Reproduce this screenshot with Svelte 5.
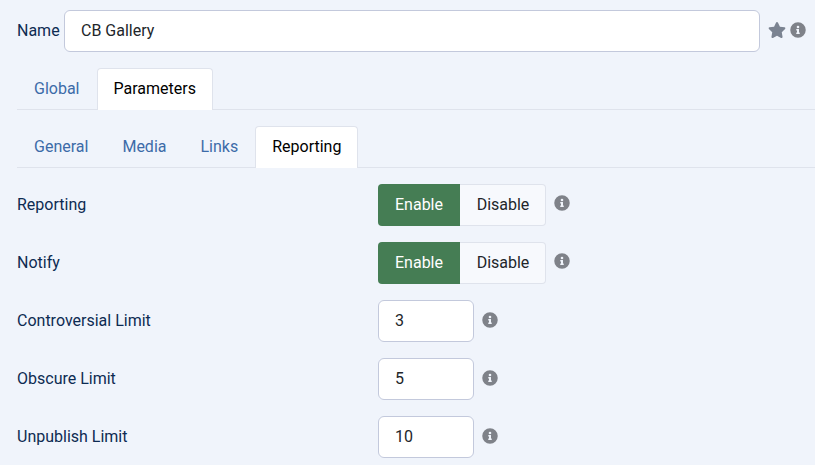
<script>
  const mainTabs = [
    { label: 'Global', active: false },
    { label: 'Parameters', active: true }
  ];
  const subTabs = [
    { label: 'General', active: false },
    { label: 'Media', active: false },
    { label: 'Links', active: false },
    { label: 'Reporting', active: true }
  ];
  const toggles = ['Reporting', 'Notify'];
  const limits = [
    { label: 'Controversial Limit', value: '3' },
    { label: 'Obscure Limit', value: '5' },
    { label: 'Unpublish Limit', value: '10' }
  ];
</script>

{#snippet info()}
  <svg class="info" viewBox="0 0 512 512" aria-hidden="true">
    <path d="M256 8a248 248 0 1 0 0 496 248 248 0 0 0 0-496zm0 110a42 42 0 1 1 0 84 42 42 0 0 1 0-84zm56 254c0 7-5 12-12 12h-88c-7 0-12-5-12-12v-24c0-7 5-12 12-12h12v-64h-12c-7 0-12-5-12-12v-24c0-7 5-12 12-12h64c7 0 12 5 12 12v100h12c7 0 12 5 12 12z" />
  </svg>
{/snippet}

{#snippet tabs(items)}
  <ul class="tabs">
    {#each items as tab}
      <li class="tab" class:active={tab.active}>{tab.label}</li>
    {/each}
  </ul>
{/snippet}

<div class="page">
  <div class="name-row">
    <label class="name-label" for="name">Name</label>
    <input id="name" class="field name-input" type="text" value="CB Gallery" />
    <div class="name-icons">
      <svg class="star" viewBox="0 0 576 512" aria-hidden="true">
        <path d="M259 18l-65 132-146 21c-26 4-37 36-18 55l106 103-25 146c-5 26 23 46 46 34l131-69 131 69c23 12 51-8 46-34l-25-146 106-103c19-19 8-51-18-55l-146-21-65-132c-12-24-47-24-58 0z" />
      </svg>
      {@render info()}
    </div>
  </div>

  {@render tabs(mainTabs)}
  {@render tabs(subTabs)}

  <div class="rows">
    {#each toggles as label}
      <div class="row">
        <div class="row-label">{label}</div>
        <div class="control">
          <div class="switch">
            <span class="opt on">Enable</span>
            <span class="opt off">Disable</span>
          </div>
          <span class="hint up">{@render info()}</span>
        </div>
      </div>
    {/each}
    {#each limits as item}
      <div class="row">
        <div class="row-label">{item.label}</div>
        <div class="control">
          <input class="field limit" type="text" value={item.value} />
          <span class="hint">{@render info()}</span>
        </div>
      </div>
    {/each}
  </div>
</div>

<style>
  :global(body) {
    background: #f0f4fb;
    overflow: hidden;
  }

  .page {
    padding: 10px 0 0 17px;
    font-family: Roboto, sans-serif;
    font-size: 16px;
    line-height: 24px;
    color: #0d2b52;
  }

  .name-row {
    display: flex;
    align-items: center;
    height: 42px;
  }

  .name-label {
    width: 47px;
  }

  .field {
    box-sizing: border-box;
    height: 42px;
    padding: 0 16px 2px;
    background: #fff;
    border: 1px solid #c3c9dc;
    border-radius: 6px;
    font: inherit;
    color: #22262a;
    outline: none;
  }

  .name-input {
    width: 696px;
  }

  .name-icons {
    display: flex;
    align-items: center;
    gap: 4px;
    margin: -2px 0 0 8px;
  }

  .star {
    width: 18px;
    height: 16px;
    fill: #7b8391;
  }

  .info {
    display: block;
    width: 16px;
    height: 16px;
    fill: #7f8289;
  }

  .tabs {
    display: flex;
    margin: 16px 0 0;
    padding: 0;
    list-style: none;
    border-bottom: 1px solid #dfe3ec;
  }

  .tab {
    box-sizing: border-box;
    height: 42px;
    margin-bottom: -1px;
    padding: 8px 16px;
    border: 1px solid transparent;
    border-bottom: 0;
    border-radius: 4px 4px 0 0;
    color: #3c6ba8;
  }

  .tab.active {
    background: #fff;
    border-color: #dfe3ec;
    color: #000;
  }

  .rows {
    display: flex;
    flex-direction: column;
    gap: 16px;
    margin-top: 16px;
  }

  .row {
    display: flex;
    align-items: center;
    height: 42px;
  }

  .row-label {
    width: 361px;
  }

  .control {
    display: flex;
    align-items: center;
  }

  .switch {
    display: flex;
    width: 168px;
    height: 42px;
    color: #22262a;
  }

  .opt {
    box-sizing: border-box;
    padding-top: 9px;
    text-align: center;
  }

  .opt.on {
    width: 82px;
    background: #457d54;
    border-radius: 4px 0 0 4px;
    color: #fff;
  }

  .opt.off {
    flex: 1;
    padding-top: 8px;
    padding-left: 1px;
    background: #f7f9fd;
    border: 1px solid #dfe3ec;
    border-left: 0;
    border-radius: 0 4px 4px 0;
  }

  .limit {
    width: 96px;
  }

  .hint {
    margin: -2px 0 0 8px;
  }

  .hint.up {
    margin-top: -4px;
  }
</style>
